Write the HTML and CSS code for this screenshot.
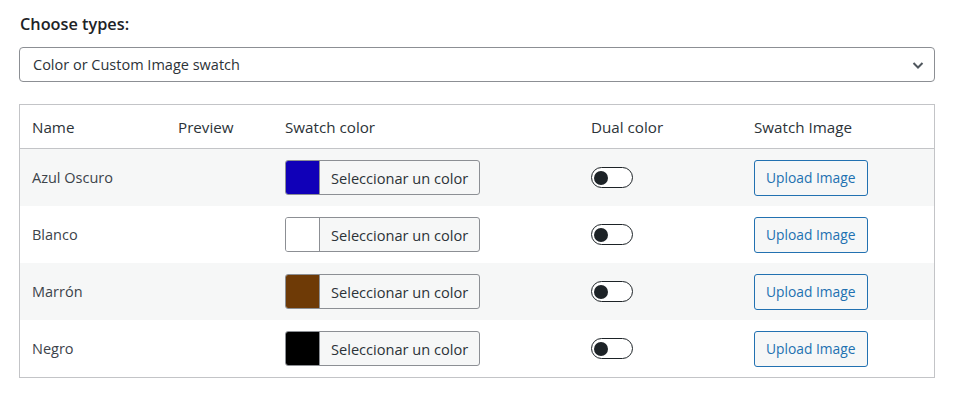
FILE: index.html
```html
<!DOCTYPE html>
<html lang="es">
<head>
<meta charset="utf-8">
<title>Swatches</title>
<link rel="stylesheet" href="styles.css">
</head>
<body>
<div class="panel">
  <label class="field-label" for="swatch-type">Choose types:</label>
  <div class="select-wrap">
    <select id="swatch-type" class="select">
      <option>Color or Custom Image swatch</option>
    </select>
    <svg class="chevron" width="16" height="16" viewBox="0 0 16 16" aria-hidden="true"><path d="M3.5 6l4.5 4.5L12.5 6" fill="none" stroke="#50575e" stroke-width="2"/></svg>
  </div>

  <div class="swatch-table">
    <div class="row head">
      <div class="cell">Name</div>
      <div class="cell">Preview</div>
      <div class="cell">Swatch color</div>
      <div class="cell">Dual color</div>
      <div class="cell">Swatch Image</div>
    </div>

    <div class="row alt">
      <div class="cell">Azul Oscuro</div>
      <div class="cell"></div>
      <div class="cell"><button class="picker"><span class="chip" style="background:#1000b8"></span><span class="picker-text">Seleccionar un color</span></button></div>
      <div class="cell"><span class="toggle"><span class="knob"></span></span></div>
      <div class="cell"><button class="upload">Upload Image</button></div>
    </div>

    <div class="row">
      <div class="cell">Blanco</div>
      <div class="cell"></div>
      <div class="cell"><button class="picker"><span class="chip" style="background:#ffffff"></span><span class="picker-text">Seleccionar un color</span></button></div>
      <div class="cell"><span class="toggle"><span class="knob"></span></span></div>
      <div class="cell"><button class="upload">Upload Image</button></div>
    </div>

    <div class="row alt">
      <div class="cell">Marrón</div>
      <div class="cell"></div>
      <div class="cell"><button class="picker"><span class="chip" style="background:#6e3a06"></span><span class="picker-text">Seleccionar un color</span></button></div>
      <div class="cell"><span class="toggle"><span class="knob"></span></span></div>
      <div class="cell"><button class="upload">Upload Image</button></div>
    </div>

    <div class="row">
      <div class="cell">Negro</div>
      <div class="cell"></div>
      <div class="cell"><button class="picker"><span class="chip" style="background:#000000"></span><span class="picker-text">Seleccionar un color</span></button></div>
      <div class="cell"><span class="toggle"><span class="knob"></span></span></div>
      <div class="cell"><button class="upload">Upload Image</button></div>
    </div>
  </div>
</div>
</body>
</html>
```

FILE: styles.css
```css
* { box-sizing: border-box; }

body {
  margin: 0;
  background: #ffffff;
  font-family: "Open Sans", "Noto Sans", sans-serif;
  color: #3c434a;
  font-size: 14.5px;
}

.panel {
  padding: 12px 22px 0 19px;
  display: flex;
  flex-direction: column;
}

.field-label {
  font-size: 16.3px;
  font-weight: 600;
  color: #1d2327;
  line-height: 24px;
  padding-left: 1px;
}

.select-wrap {
  position: relative;
  margin-top: 11px;
}

.select {
  width: 100%;
  height: 35px;
  appearance: none;
  -webkit-appearance: none;
  border: 1px solid #8c8f94;
  border-radius: 4px;
  background: #fff;
  font-family: inherit;
  font-size: 14.5px;
  color: #2c3338;
  padding: 0 30px 0 13px;
}

.chevron {
  position: absolute;
  right: 9px;
  top: 10px;
  pointer-events: none;
}

.swatch-table {
  margin-top: 22px;
  border: 1px solid #c3c4c7;
}

.row {
  display: grid;
  grid-template-columns: 146px 107px 306px 163px 1fr;
  height: 57px;
  align-items: center;
}

.row.head {
  height: 44px;
  border-bottom: 1px solid #c3c4c7;
}

.row.head .cell {
  color: #2c3338;
  font-weight: 500;
  font-size: 15.2px;
}

.row.alt { background: #f6f7f7; }

.cell {
  padding-left: 12px;
  display: flex;
  align-items: center;
}

.picker {
  display: flex;
  align-items: stretch;
  width: 195px;
  height: 35px;
  padding: 0;
  border: 1px solid #8c8f94;
  border-radius: 3px;
  background: #f6f7f7;
  overflow: hidden;
  font-family: inherit;
  cursor: pointer;
}

.chip {
  width: 34px;
  border-right: 1px solid #8c8f94;
}

.picker-text {
  display: flex;
  align-items: center;
  padding-left: 11px;
  font-size: 14.6px;
  color: #2c3338;
}

.toggle {
  width: 42px;
  height: 21px;
  border: 1.5px solid #1d2327;
  border-radius: 11px;
  background: #fff;
  display: flex;
  align-items: center;
  padding-left: 2px;
}

.knob {
  width: 14px;
  height: 14px;
  border-radius: 50%;
  background: #1d2327;
}

.upload {
  height: 36px;
  padding: 0 11px;
  border: 1px solid #2271b1;
  border-radius: 3px;
  background: #f6f7f7;
  color: #2271b1;
  font-family: inherit;
  font-size: 13.8px;
  cursor: pointer;
}
```
